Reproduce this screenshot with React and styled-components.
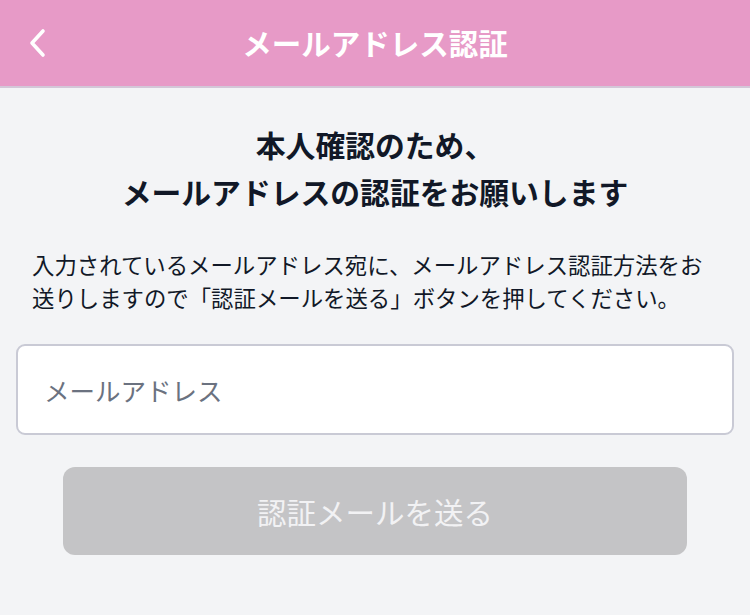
import React from 'react';
import styled, { createGlobalStyle } from 'styled-components';

const GlobalStyle = createGlobalStyle`
  html, body {
    margin: 0;
    padding: 0;
    background: #f3f4f6;
    font-family: "Noto Sans CJK JP", "Noto Sans", sans-serif;
  }
`;

const Page = styled.div`
  width: 750px;
  min-height: 615px;
  background: #f3f4f6;
`;

const Header = styled.header`
  position: relative;
  height: 86px;
  background: #e79ac7;
  border-bottom: 2px solid #d3c7d8;
  display: flex;
  align-items: center;
  justify-content: center;
`;

const BackButton = styled.button`
  position: absolute;
  left: 22px;
  top: 50%;
  transform: translateY(-50%);
  background: none;
  border: none;
  padding: 6px;
  display: flex;
  cursor: pointer;
`;

const Title = styled.h1`
  margin: 0;
  color: #ffffff;
  font-size: 29.5px;
  font-weight: 700;
  line-height: 1;
`;

const Main = styled.main`
  display: flex;
  flex-direction: column;
  padding: 33px 16px 0;
`;

const Heading = styled.h2`
  margin: 0;
  text-align: center;
  color: #111827;
  font-size: 29.8px;
  font-weight: 700;
  line-height: 47px;
`;

const Lead = styled.p`
  margin: 33px 0 0;
  padding: 0 16px;
  color: #111827;
  font-size: 22.4px;
  font-weight: 400;
  line-height: 33px;
`;

const EmailInput = styled.input`
  margin-top: 30px;
  height: 91px;
  box-sizing: border-box;
  border: 2px solid #c9cad5;
  border-radius: 9px;
  background: #ffffff;
  padding: 0 26px;
  font-family: inherit;
  font-size: 25.5px;
  color: #111827;
  outline: none;

  &::placeholder {
    color: #6b7280;
  }
`;

const SubmitButton = styled.button`
  margin: 32px 47px 0;
  height: 88px;
  border: none;
  border-radius: 12px;
  background: ${(p) => (p.disabled ? '#c4c4c6' : '#e79ac7')};
  color: #f2f2f4;
  font-family: inherit;
  font-size: 29.5px;
  font-weight: 400;
`;

function ChevronLeft() {
  return (
    <svg width="20" height="30" viewBox="0 0 20 30" fill="none">
      <path
        d="M15 3 L4 15 L15 27"
        stroke="#ffffff"
        strokeWidth="3.6"
        strokeLinecap="round"
        strokeLinejoin="round"
      />
    </svg>
  );
}

export default function App() {
  return (
    <Page>
      <GlobalStyle />
      <Header>
        <BackButton aria-label="戻る">
          <ChevronLeft />
        </BackButton>
        <Title>メールアドレス認証</Title>
      </Header>
      <Main>
        <Heading>
          本人確認のため、
          <br />
          メールアドレスの認証をお願いします
        </Heading>
        <Lead>
          入力されているメールアドレス宛に、メールアドレス認証方法をお送りしますので「認証メールを送る」ボタンを押してください。
        </Lead>
        <EmailInput type="email" placeholder="メールアドレス" />
        <SubmitButton disabled>認証メールを送る</SubmitButton>
      </Main>
    </Page>
  );
}
